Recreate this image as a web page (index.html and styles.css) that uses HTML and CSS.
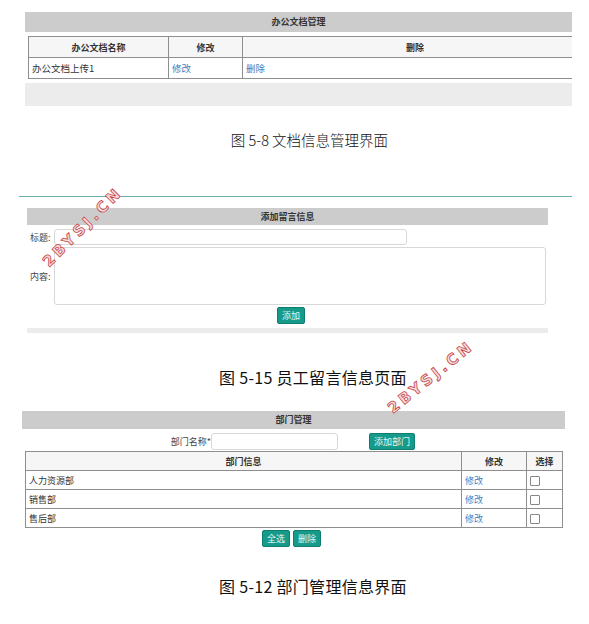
FILE: index.html
```
<!DOCTYPE html>
<html lang="zh">
<head>
<meta charset="utf-8">
<title>界面截图</title>
<link rel="stylesheet" href="styles.css">
</head>
<body>
<div class="page">
  <section class="doc">
    <div class="bar bar-doc">办公文档管理</div>
    <div class="doc-table-wrap">
      <table class="grid doc-table">
        <tr class="head"><th class="c1">办公文档名称</th><th class="c2">修改</th><th class="c3">删除</th></tr>
        <tr><td>办公文档上传1</td><td><a>修改</a></td><td><a>删除</a></td></tr>
      </table>
    </div>
    <div class="foot foot-doc"></div>
  </section>
  <p class="caption cap1">图 5-8 文档信息管理界面</p>

  <hr class="rule">

  <section class="msg">
    <div class="bar bar-msg">添加留言信息</div>
    <div class="row row-title"><span class="lbl">标题:</span><span class="input input-title"></span></div>
    <div class="row row-content"><span class="lbl">内容:</span><span class="textarea"></span></div>
    <div class="btn-row"><span class="btn">添加</span></div>
    <div class="foot foot-msg"></div>
  </section>
  <p class="caption cap2">图 5-15 员工留言信息页面</p>

  <section class="dept">
    <div class="bar bar-dept">部门管理</div>
    <div class="add-row"><span class="lbl-r">部门名称*</span><span class="input input-dept"></span><span class="btn btn-add">添加部门</span></div>
    <table class="grid dept-table">
      <tr class="head"><th class="d1">部门信息</th><th class="d2">修改</th><th class="d3">选择</th></tr>
      <tr><td>人力资源部</td><td><a>修改</a></td><td><span class="cb"></span></td></tr>
      <tr><td>销售部</td><td><a>修改</a></td><td><span class="cb"></span></td></tr>
      <tr><td>售后部</td><td><a>修改</a></td><td><span class="cb"></span></td></tr>
    </table>
    <div class="btn-row2"><span class="btn">全选</span><span class="btn">删除</span></div>
  </section>
  <p class="caption cap3">图 5-12 部门管理信息界面</p>

  <div class="wm wm1">2BYSJ.CN</div>
  <div class="wm wm2">2BYSJ.CN</div>
</div>
</body>
</html>
```
FILE: styles.css
```
html, body { margin: 0; padding: 0; background: #fff; }
body { font-family: "Noto Sans CJK SC", "DejaVu Sans", sans-serif; font-size: 10px; color: #333; }
.page { position: relative; width: 589px; height: 624px; overflow: hidden; }

.bar { background: #cccccc; color: #333; font-weight: bold; font-size: 9px; text-align: center; box-sizing: border-box; }
.foot { background: #ececec; }

/* section 1 */
.doc { padding-top: 12px; }
.bar-doc { margin-left: 25px; width: 547px; height: 20px; line-height: 20px; }
.doc-table-wrap { margin: 4px 0 0 28px; width: 544px; overflow: hidden; }
.grid { border-collapse: collapse; }
.grid th, .grid td { border: 1px solid #8e8e8e; padding: 0 3px; text-align: left; font-weight: normal; white-space: nowrap; }
.grid th { text-align: center; font-weight: bold; font-size: 9px; background: #f6f6f6; }
.grid a { color: #3c7fc4; }
.doc-table { width: 560px; }
.doc-table tr { height: 21px; }
.doc-table .c1 { width: 133px; }
.doc-table .c2 { width: 67px; }
.doc-table td { font-size: 9.5px; }
.foot-doc { margin: 4px 0 0 25px; width: 547px; height: 23px; }

.caption { margin: 0; text-align: center; font-size: 15px; line-height: 18px; color: #111; }
.cap1 { margin-top: 25px; padding-left: 30px; font-weight: 300; font-size: 14.5px; }

.rule { margin: 47px 0 0 19px; width: 553px; border: 0; height: 1px; background: #6aaeae; }

/* section 2 */
.msg { padding-top: 11px; }
.bar-msg { margin-left: 27px; width: 521px; height: 17px; line-height: 17px; }
.row { display: flex; align-items: center; margin-left: 27px; }
.row .lbl { width: 27px; padding-left: 3px; box-sizing: border-box; font-size: 9px; color: #444; }
.row-title { margin-top: 4px; height: 16px; }
.input { display: block; box-sizing: border-box; border: 1px solid #d8d8d8; border-radius: 3px; background: #fff; }
.input-title { width: 353px; height: 16px; }
.row-content { margin-top: 2px; height: 58px; }
.textarea { display: block; box-sizing: border-box; width: 492px; height: 58px; border: 1px solid #d8d8d8; border-radius: 3px; }
.btn-row { display: flex; justify-content: center; margin: 2px 0 0 27px; width: 528px; }
.btn { display: inline-block; background: #169b8b; color: #e6f5f2; border: 1px solid #0f7d70; border-radius: 2px; font-size: 9px; line-height: 15px; height: 15px; padding: 0 4px; }
.foot-msg { margin: 4px 0 0 27px; width: 521px; height: 5px; }

.cap2 { margin-top: 35px; padding-left: 37px; font-size: 16px; letter-spacing: 0.3px; }

/* section 3 */
.dept { padding-top: 25px; }
.bar-dept { margin-left: 22px; width: 543px; height: 18px; line-height: 18px; }
.add-row { display: flex; align-items: center; margin-top: 4px; height: 17px; }
.lbl-r { width: 211px; text-align: right; font-size: 9px; color: #444; }
.input-dept { width: 127px; height: 17px; }
.btn-add { margin-left: 31px; height: 15px; line-height: 15px; }
.dept-table { margin: 1px 0 0 25px; width: 538px; }
.dept-table tr { height: 19px; }
.dept-table .d2 { width: 58px; }
.dept-table .d3 { width: 29px; }
.dept-table td { font-size: 9px; }
.cb { display: inline-block; width: 8px; height: 8px; border: 1px solid #888; border-radius: 1px; vertical-align: middle; }
.btn-row2 { display: flex; gap: 3px; margin: 2px 0 0 262px; }

.cap3 { margin-top: 30px; padding-left: 37px; font-size: 16px; letter-spacing: 0.3px; }

/* watermark */
.wm { position: absolute; font-family: "DejaVu Sans", sans-serif; font-weight: bold; font-size: 15px; letter-spacing: 3.5px; color: #f6dcdc; -webkit-text-stroke: 0.8px #c6474b; transform-origin: center; white-space: nowrap; }
.wm1 { left: 30px; top: 218px; transform: rotate(-45deg); }
.wm2 { left: 378px; top: 368px; transform: rotate(-39deg); }
```
